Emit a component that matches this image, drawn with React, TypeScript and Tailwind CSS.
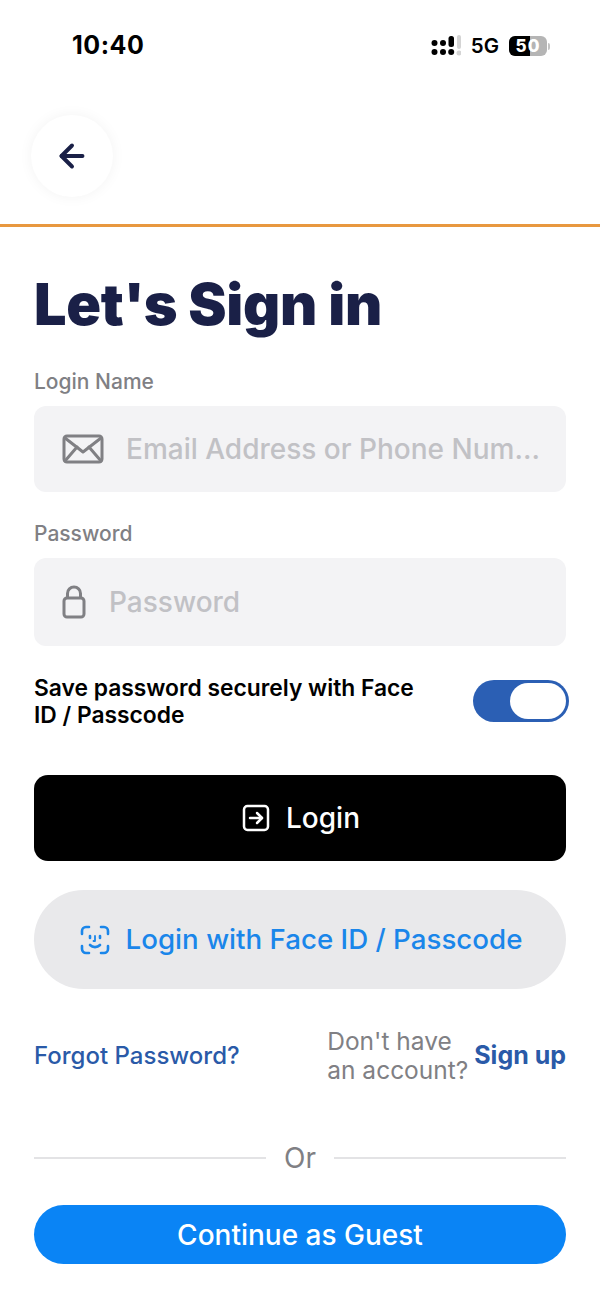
import { ArrowLeft } from 'lucide-react';

function StatusBar() {
  return (
    <div className="h-[92px] pl-[72px] pr-[50px] flex items-center justify-between">
      <span className="text-[25px] font-bold text-black tracking-[0.5px]">10:40</span>
      <div className="flex items-center gap-[10px]">
        <SignalIcon />
        <span className="text-[20.5px] font-semibold text-black">5G</span>
        <div className="flex items-center">
          <div className="w-[38px] h-[20px] rounded-[6px] bg-[#b5b5b5] overflow-hidden relative flex items-center justify-center">
            <div className="absolute left-0 top-0 bottom-0 w-[21px] bg-black" />
            <span className="relative text-[17px] font-extrabold text-white leading-none tracking-[1px]">50</span>
          </div>
          <div className="w-[2px] h-[7px] ml-[1px] rounded-r bg-[#c4c4c4]" />
        </div>
      </div>
    </div>
  );
}

function SignalIcon() {
  return (
    <svg width="30" height="22" viewBox="0 0 30 22" fill="#000">
      <circle cx="3.5" cy="8" r="3" />
      <circle cx="3.5" cy="17" r="3" />
      <circle cx="12" cy="8" r="3" />
      <circle cx="12" cy="17" r="3" />
      <rect x="17.5" y="1" width="5.5" height="11" rx="2.5" />
      <circle cx="20.2" cy="17" r="3" />
      <rect x="26" y="0" width="4" height="14" rx="2" fill="#d4d4d4" />
      <circle cx="28" cy="18" r="2.5" fill="#d4d4d4" />
    </svg>
  );
}

function MailIcon() {
  return (
    <svg width="42" height="30" viewBox="0 0 42 30" fill="none" stroke="#808084" strokeWidth="3" strokeLinejoin="round" strokeLinecap="round">
      <rect x="2" y="2" width="38" height="26" rx="3" />
      <path d="M3 4 L21 18 L39 4" />
      <path d="M3 27 L15 13" />
      <path d="M39 27 L27 13" />
    </svg>
  );
}

function LockIcon() {
  return (
    <svg width="24" height="34" viewBox="0 0 24 34" fill="none" stroke="#808084" strokeWidth="3" strokeLinejoin="round">
      <rect x="2" y="13" width="20" height="19" rx="3" />
      <path d="M5.5 13 V8.5 a6.5 6.5 0 0 1 13 0 V13" />
    </svg>
  );
}

function LoginIcon() {
  return (
    <svg width="28" height="28" viewBox="0 0 28 28" fill="none" stroke="#fff" strokeWidth="2.5" strokeLinecap="round" strokeLinejoin="round">
      <rect x="2" y="2" width="24" height="24" rx="3.5" />
      <path d="M8 14 H20" />
      <path d="M15 9 L20 14 L15 19" />
    </svg>
  );
}

function FaceIdIcon() {
  return (
    <svg width="30" height="30" viewBox="0 0 30 30" fill="none" stroke="#1a86ea" strokeWidth="2.6" strokeLinecap="round" strokeLinejoin="round">
      <path d="M2 9 V6 a4 4 0 0 1 4 -4 H9" />
      <path d="M21 2 H24 a4 4 0 0 1 4 4 V9" />
      <path d="M28 21 V24 a4 4 0 0 1 -4 4 H21" />
      <path d="M9 28 H6 a4 4 0 0 1 -4 -4 V21" />
      <path d="M10 11 V13" />
      <path d="M20 11 V13" />
      <path d="M15 11 V16 H13.5" strokeWidth="1.8" />
      <path d="M10 20 a7 7 0 0 0 10 0" />
    </svg>
  );
}

function Field({ label, placeholder, icon, gap, height }: { label: string; placeholder: string; icon: React.ReactNode; gap: string; height: string }) {
  return (
    <div>
      <div className="text-[21px] leading-[24px] font-medium text-[#808084]">{label}</div>
      <div className={`mt-[12px] ${height} rounded-[12px] bg-[#f3f3f5] pl-[28px] flex items-center ${gap}`}>
        {icon}
        <span className="text-[28px] text-[#c1c1c5] font-medium whitespace-nowrap">{placeholder}</span>
      </div>
    </div>
  );
}

export default function App() {
  return (
    <div className="w-[600px] h-[1299px] bg-white overflow-hidden font-['Inter',sans-serif]">
      <StatusBar />

      <div className="h-[135px] border-b-[3px] border-[#e8983f] pl-[31px] pt-[23px]">
        <div className="w-[82px] h-[82px] rounded-full bg-white shadow-[0_0_14px_rgba(0,0,0,0.05)] flex items-center justify-center">
          <ArrowLeft size={36} color="#1a2047" strokeWidth={2.6} />
        </div>
      </div>

      <div className="px-[34px]">
        <h1 className="mt-[41px] text-[57.5px] leading-[72px] font-black text-[#1a2047] tracking-[-0.3px]">Let's Sign in</h1>

        <div className="mt-[30px] flex flex-col gap-[30px]">
          <Field
            label="Login Name"
            placeholder="Email Address or Phone Num..."
            icon={<MailIcon />}
            gap="gap-[22px]"
            height="h-[86px]"
          />
          <Field
            label="Password"
            placeholder="Password"
            icon={<LockIcon />}
            gap="gap-[23px]"
            height="h-[88px]"
          />
        </div>

        <div className="mt-[28px] flex items-center justify-between">
          <p className="w-[400px] text-[22.8px] leading-[27px] font-semibold text-black">
            Save password securely with Face ID / Passcode
          </p>
          <div className="w-[96px] h-[42px] -mr-[3px] rounded-full bg-[#2b5fb4] p-[3px] flex justify-end">
            <div className="w-[56px] h-full rounded-full bg-white" />
          </div>
        </div>

        <button className="mt-[47px] w-full h-[86px] pl-[2px] rounded-[14px] bg-black flex items-center justify-center gap-[16px] text-white text-[28px] font-medium">
          <LoginIcon />
          Login
        </button>

        <button className="mt-[29px] w-full h-[99px] pl-[2px] rounded-full bg-[#e9e9eb] flex items-center justify-center gap-[16px] text-[#1a86ea] text-[27.7px] font-medium">
          <FaceIdIcon />
          Login with Face ID / Passcode
        </button>

        <div className="mt-[37px] h-[60px] flex items-center">
          <span className="text-[24px] font-medium text-[#2a5aa8]">Forgot Password?</span>
          <span className="ml-auto w-[147px] text-[24.5px] leading-[29px] text-[#808084]">Don't have an account?</span>
          <span className="text-[25px] font-bold text-[#2a5aa8] whitespace-nowrap">Sign up</span>
        </div>

        <div className="mt-[52px] h-[40px] flex items-center">
          <div className="flex-1 h-[2px] bg-[#e3e3e5]" />
          <span className="w-[68px] text-center text-[28px] text-[#808084]">Or</span>
          <div className="flex-1 h-[2px] bg-[#e3e3e5]" />
        </div>

        <button className="mt-[27px] w-full h-[59px] rounded-full bg-[#0a84f5] text-white text-[28px] font-medium">
          Continue as Guest
        </button>
      </div>
    </div>
  );
}
